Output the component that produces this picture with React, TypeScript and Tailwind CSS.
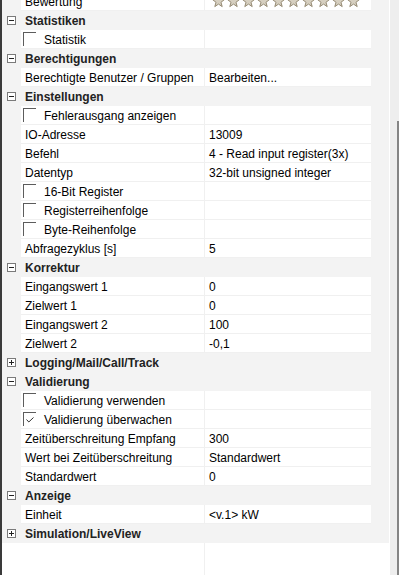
import React from "react";

type Row =
  | { kind: "cat"; label: string; open: boolean }
  | { kind: "prop"; label: string; value?: string; check?: boolean; checked?: boolean; stars?: boolean };

const rows: Row[] = [
  { kind: "prop", label: "Bewertung", stars: true },
  { kind: "cat", label: "Statistiken", open: true },
  { kind: "prop", label: "Statistik", check: true },
  { kind: "cat", label: "Berechtigungen", open: true },
  { kind: "prop", label: "Berechtigte Benutzer / Gruppen", value: "Bearbeiten..." },
  { kind: "cat", label: "Einstellungen", open: true },
  { kind: "prop", label: "Fehlerausgang anzeigen", check: true },
  { kind: "prop", label: "IO-Adresse", value: "13009" },
  { kind: "prop", label: "Befehl", value: "4 - Read input register(3x)" },
  { kind: "prop", label: "Datentyp", value: "32-bit unsigned integer" },
  { kind: "prop", label: "16-Bit Register", check: true },
  { kind: "prop", label: "Registerreihenfolge", check: true },
  { kind: "prop", label: "Byte-Reihenfolge", check: true },
  { kind: "prop", label: "Abfragezyklus [s]", value: "5" },
  { kind: "cat", label: "Korrektur", open: true },
  { kind: "prop", label: "Eingangswert 1", value: "0" },
  { kind: "prop", label: "Zielwert 1", value: "0" },
  { kind: "prop", label: "Eingangswert 2", value: "100" },
  { kind: "prop", label: "Zielwert 2", value: "-0,1" },
  { kind: "cat", label: "Logging/Mail/Call/Track", open: false },
  { kind: "cat", label: "Validierung", open: true },
  { kind: "prop", label: "Validierung verwenden", check: true },
  { kind: "prop", label: "Validierung überwachen", check: true, checked: true },
  { kind: "prop", label: "Zeitüberschreitung Empfang", value: "300" },
  { kind: "prop", label: "Wert bei Zeitüberschreitung", value: "Standardwert" },
  { kind: "prop", label: "Standardwert", value: "0" },
  { kind: "cat", label: "Anzeige", open: true },
  { kind: "prop", label: "Einheit", value: "<v.1> kW" },
  { kind: "cat", label: "Simulation/LiveView", open: false },
];

function Toggle({ open }: { open: boolean }) {
  return (
    <svg width="9" height="9" viewBox="0 0 9 9" className="shrink-0">
      <rect x="0.5" y="0.5" width="8" height="8" fill="#fff" stroke="#7a7a7a" />
      <line x1="2" y1="4.5" x2="7" y2="4.5" stroke="#222" />
      {!open && <line x1="4.5" y1="2" x2="4.5" y2="7" stroke="#222" />}
    </svg>
  );
}

function Star() {
  return (
    <svg width="13" height="13" viewBox="0 0 13 13" className="shrink-0">
      <polygon
        points="6.5,0.2 8.03,4.4 12.49,4.55 8.97,7.3 10.2,11.6 6.5,9.1 2.8,11.6 4.03,7.3 0.51,4.55 4.97,4.4"
        fill="#d6cfc0"
        stroke="#958a73"
        strokeWidth="1"
        strokeLinejoin="round"
      />
    </svg>
  );
}

function CheckBox({ checked }: { checked?: boolean }) {
  return (
    <div className="ml-[2px] mt-[2px] flex h-[14px] w-[13px] shrink-0 items-center justify-center border-l border-t border-[#5c5c5c]">
      {checked && (
        <svg width="8" height="6" viewBox="0 0 8 6">
          <polyline points="0.5,2.5 2.8,5 7.5,0.5" fill="none" stroke="#333" strokeWidth="1" />
        </svg>
      )}
    </div>
  );
}

function Category({ label, open }: { label: string; open: boolean }) {
  return (
    <div className="flex h-[19px] items-center bg-[#f3f3f3]">
      <div className="ml-[5px]">
        <Toggle open={open} />
      </div>
      <span className="ml-[9px] pt-px font-bold leading-[19px] text-[#222]">{label}</span>
    </div>
  );
}

function Property({ row }: { row: Extract<Row, { kind: "prop" }> }) {
  return (
    <div className="flex h-[19px]">
      <div className="w-[19px] bg-[#f3f3f3]" />
      <div className="flex w-[183px] items-start border-b border-[#f0f0f0] bg-white">
        {row.check ? (
          <>
            <CheckBox checked={row.checked} />
            <span className="ml-[8px] whitespace-nowrap pt-px leading-[19px]">{row.label}</span>
          </>
        ) : (
          <span className="whitespace-nowrap pl-[4px] pt-px leading-[19px]">{row.label}</span>
        )}
      </div>
      <div className="w-px bg-[#f0f0f0]" />
      <div className="flex w-[166px] items-start border-b border-[#f0f0f0] bg-white">
        {row.stars ? (
          <div className="ml-[7px] mt-[3px] flex gap-[2px]">
            {Array.from({ length: 10 }).map((_, i) => (
              <Star key={i} />
            ))}
          </div>
        ) : (
          <span className="whitespace-nowrap pl-[4px] pt-px leading-[19px]">{row.value}</span>
        )}
      </div>
      <div className="w-[18px] bg-[#f3f3f3]" />
    </div>
  );
}

export default function App() {
  return (
    <div className="flex h-[575px] w-[399px] overflow-hidden bg-white font-['Liberation_Sans',Arial,sans-serif] text-[12px] text-black">
      <div className="w-[2px] bg-[#3a3a3a]" />
      <div className="flex w-[387px] flex-col overflow-hidden">
        <div className="-mt-[8px]">
          {rows.map((row, i) =>
            row.kind === "cat" ? (
              <Category key={i} label={row.label} open={row.open} />
            ) : (
              <Property key={i} row={row} />
            )
          )}
        </div>
        <div className="flex flex-1">
          <div className="w-[202px]" />
          <div className="w-px bg-[#f0f0f0]" />
        </div>
      </div>
      <div className="w-px bg-white" />
      <div className="flex w-[9px] flex-col items-end bg-[#eeeeee]">
        <div className="h-[121px]" />
        <div className="w-[2px] flex-1 bg-[#858585]" />
      </div>
    </div>
  );
}
